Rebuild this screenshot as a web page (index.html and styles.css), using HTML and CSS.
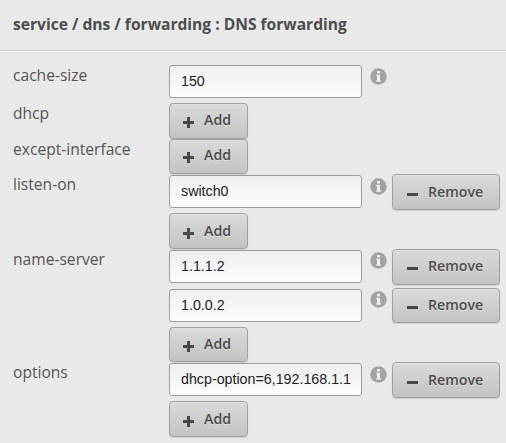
FILE: index.html
```
<!DOCTYPE html>
<html lang="en">
<head>
<meta charset="utf-8">
<title>DNS forwarding</title>
<link rel="stylesheet" href="styles.css">
</head>
<body>
<svg width="0" height="0" class="defs">
  <symbol id="info" viewBox="0 0 17 17"><circle cx="8.5" cy="8.5" r="8.2" fill="#a2a2a2"/><path d="M7 3h3v2.4H7zM6.3 6.8H10v5.4h.9v1.5H6.2v-1.5H7V8.3h-.7z" fill="#eee"/></symbol>
  <symbol id="plus" viewBox="0 0 11 11"><path d="M4 0h3v4h4v3H7v4H4V7H0V4h4z" fill="#484848"/></symbol>
  <symbol id="minus" viewBox="0 0 11 11"><path d="M0 4h11v3H0z" fill="#484848"/></symbol>
</svg>
<header class="head"><h1>service / dns / forwarding : DNS forwarding</h1></header>
<main class="form">
  <section class="row"><label>cache-size</label><div class="values">
    <div class="line"><input value="150"><svg class="info"><use href="#info"/></svg></div>
  </div></section>
  <section class="row"><label>dhcp</label><div class="values">
    <div class="line add"><button><svg><use href="#plus"/></svg>Add</button></div>
  </div></section>
  <section class="row"><label>except-interface</label><div class="values">
    <div class="line add"><button class="short high"><svg><use href="#plus"/></svg>Add</button></div>
  </div></section>
  <section class="row raised"><label>listen-on</label><div class="values">
    <div class="line"><input value="switch0"><svg class="info"><use href="#info"/></svg><button class="remove low"><svg><use href="#minus"/></svg>Remove</button></div>
    <div class="line add last"><button class="low"><svg><use href="#plus"/></svg>Add</button></div>
  </div></section>
  <section class="row raised"><label>name-server</label><div class="values">
    <div class="line tall"><input value="1.1.1.2"><svg class="info raised-icon"><use href="#info"/></svg><button class="remove"><svg><use href="#minus"/></svg>Remove</button></div>
    <div class="line"><input value="1.0.0.2"><svg class="info raised-icon"><use href="#info"/></svg><button class="remove short"><svg><use href="#minus"/></svg>Remove</button></div>
    <div class="line add"><button class="short"><svg><use href="#plus"/></svg>Add</button></div>
  </div></section>
  <section class="row raised"><label>options</label><div class="values">
    <div class="line"><input value="dhcp-option=6,192.168.1.1"><svg class="info"><use href="#info"/></svg><button class="remove low"><svg><use href="#minus"/></svg>Remove</button></div>
    <div class="line add"><button class="low"><svg><use href="#plus"/></svg>Add</button></div>
  </div></section>
</main>
</body>
</html>
```
FILE: styles.css
```
* { box-sizing: border-box; }
body {
  margin: 0;
  height: 443px;
  overflow: hidden;
  background: #e9e9e9;
  color: #555;
  font: 15.6px/22px "Open Sans", sans-serif;
}
.defs { display: block; }
.head {
  height: 51px;
  padding: 13px 13px 0;
  border-bottom: 1px solid #ccc;
  box-shadow: 0 1px #fafafa;
}
h1 { margin: 0; font-size: 15.6px; line-height: 22px; font-weight: 700; color: #4c4c4c; }
.form { padding: 14px 0 0 13px; }
.row { display: grid; grid-template-columns: 156px 1fr; }
.row label { height: 22px; margin-top: -1px; }
.row.raised label { margin-top: -2px; }
.line { display: flex; align-items: flex-start; height: 38px; }
.line.add { height: 36px; }
.line.last { height: 37px; }
.line.tall { height: 39px; }
input {
  width: 193px;
  height: 33px;
  padding: 0 10px 1px 11px;
  border: 1px solid #9c9c9c;
  border-radius: 3px;
  background: linear-gradient(#efefef, #fcfcfc);
  color: #222;
  font: 14.25px "Liberation Sans", sans-serif;
}
.info { width: 17px; height: 17px; margin: 3px 0 0 8px; flex: none; }
.info.raised-icon { margin-top: 2px; }
button {
  display: flex;
  align-items: flex-start;
  width: 79px;
  height: 36px;
  padding: 5px 0 0 13px;
  border: 1px solid #a0a0a0;
  border-radius: 4px;
  background: linear-gradient(#dadada, #c3c3c3);
  box-shadow: 0 1px 1px rgba(0, 0, 0, .12), inset 0 1px rgba(255, 255, 255, .25);
  color: #4c4c4c;
  font: 600 14.2px/22px "Open Sans", sans-serif;
  text-shadow: 0 1px rgba(255, 255, 255, .4);
}
button svg { width: 11px; height: 11px; margin: 8px 10px 0 0; flex: none; }
button.short { height: 35px; }
button.high { padding-top: 4px; }
button.low { padding-top: 6px; }
button.remove { width: 108px; margin: -1px 0 0 5px; padding-left: 14px; }
```
